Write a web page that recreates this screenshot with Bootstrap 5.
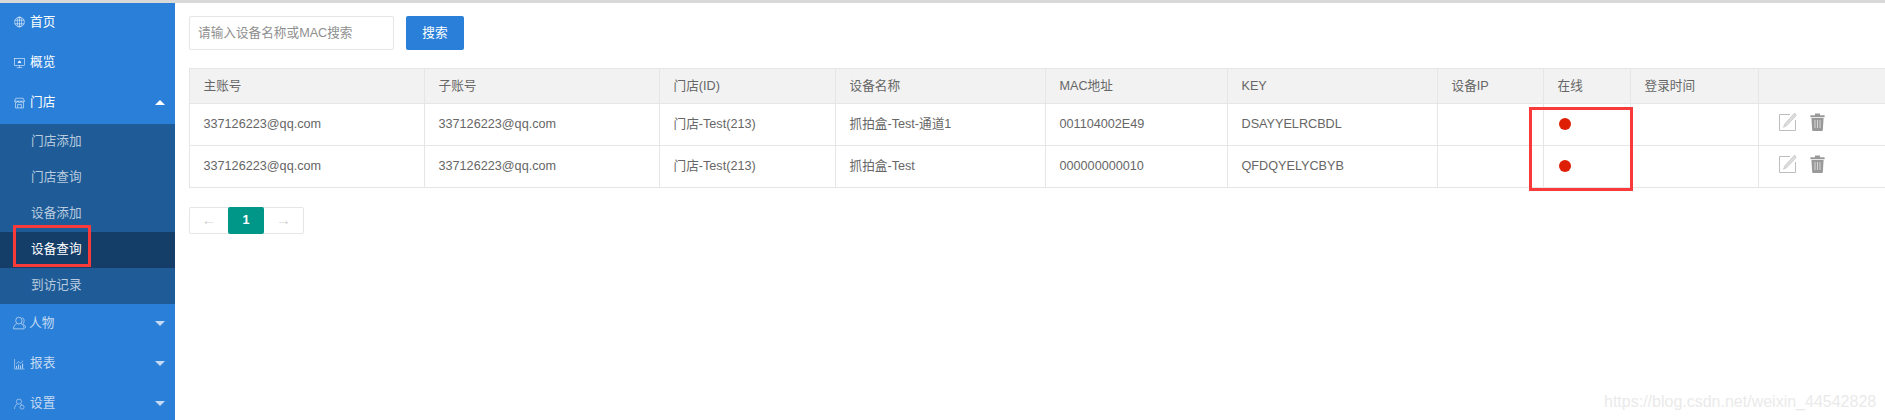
<!DOCTYPE html>
<html lang="zh-CN">
<head>
<meta charset="UTF-8">
<meta name="viewport" content="width=device-width, initial-scale=1.0">
<title>设备查询</title>
<link href="https://cdn.jsdelivr.net/npm/bootstrap@5.3.0/dist/css/bootstrap.min.css" rel="stylesheet">
<style>
    html, body { height: 100%; overflow: hidden; }
    body {
        font-family: "Liberation Sans", "Noto Sans CJK SC", sans-serif;
        font-size: 12.65px;
        color: #666;
        background: #fff;
        border-top: 3px solid #d9d9d9;
        position: relative;
    }
    .side-bar { width: 175px; height: 417px; background: #2a80d9; flex-shrink: 0; overflow: hidden; }
    .side-item { height: 40.35px; padding: 0 0 2px 14px; color: #fff; }
    .side-item.dim { color: #c5daf3; }
    .side-item svg { width: 11px; height: 12px; margin-right: 5px; flex-shrink: 0; }
    .side-item svg.wide-icon { width: 13px; height: 14px; margin: 0 3px 0 -1px; }
    .side-item .side-label { font-size: 12.65px; }
    .caret-up, .caret-down { width: 0; height: 0; margin-left: auto; margin-right: 10px; border-left: 5.5px solid transparent; border-right: 5.5px solid transparent; }
    .caret-up { border-bottom: 5px solid #fff; }
    .caret-down { border-top: 5px solid #c5daf3; }
    .sub-menu { background: #1e5b97; }
    .sub-item { height: 36px; line-height: 35px; padding-left: 31px; color: #b9cbdf; }
    .sub-item.on { background: #143d68; color: #fff; }
    .main-area { flex: 1; min-width: 0; padding: 13px 0 0 14px; }
    .search-input { width: 205px; height: 34px; border: 1px solid #e6e6e6; border-radius: 2px; padding: 0 8px; font-size: 12.65px; color: #666; }
    .search-input::placeholder { color: #8f8f8f; opacity: 1; }
    .search-btn { width: 58px; height: 34px; margin-left: 12px; padding: 0; background: #2a80d9; border: 0; border-radius: 2px; color: #fff; font-size: 12.65px; }
    .dev-tbl { table-layout: fixed; width: 1696px; margin: 18px 0 0; border-collapse: collapse; color: #666; font-size: 12.65px; }
    .dev-tbl th, .dev-tbl td { border: 1px solid #e6e6e6; padding: 0 0 0 13.5px; font-weight: 400; color: #666; vertical-align: middle; }
    .dev-tbl th { height: 35px; background: #f2f2f2; }
    .dev-tbl td { height: 42px; }
    .dev-tbl tr > :last-child { border-right: 0; }
    .w-a { width: 235px; }
    .w-c { width: 176px; }
    .w-d { width: 210px; }
    .w-e { width: 182px; }
    .w-f { width: 210px; }
    .w-g { width: 106px; }
    .w-h { width: 87px; }
    .w-i { width: 128px; }
    .red-dot { display: block; width: 12px; height: 12px; border-radius: 50%; background: #de1f06; margin: -2px 0 0 1px; }
    .act-row { padding-left: 6px; padding-bottom: 6px; gap: 13px; }
    .act-row svg { display: block; }
    .pager { margin: 19px 0 0; height: 27px; width: 115px; border: 1px solid #e6e6e6; border-radius: 2px; }
    .pager-cell { flex: 0 0 38px; display: flex; align-items: center; justify-content: center; color: #d2d2d2; font-size: 15px; }
    .pager-cell.on { flex: 0 0 36px; height: 27px; margin-top: -1px; margin-bottom: -1px; background: #009688; color: #fff; font-weight: 700; font-size: 12.65px; border-radius: 2px; }
    .pager-cell:last-child { flex: 1; }
    .mark-box { position: absolute; border: 3px solid #f93a3a; pointer-events: none; }
    .mark-side { left: 13px; top: 222px; width: 78px; height: 42px; }
    .mark-col { left: 1529px; top: 104px; width: 104px; height: 84px; }
    .water-mark { position: absolute; left: 1604px; top: 389px; font-size: 16px; line-height: 20px; color: #eaeaea; white-space: nowrap; }
</style>
</head>
<body>

<div class="d-flex">
    <!-- left menu -->
    <div class="side-bar">
        <div class="side-item d-flex align-items-center">
            <svg viewBox="0 0 12 12" fill="none" stroke="currentColor" stroke-width=".6"><circle cx="6" cy="6" r="5.3"/><ellipse cx="6" cy="6" rx="2.4" ry="5.3"/><path d="M.8 4h10.4M.8 8h10.4M6 .7v10.6"/></svg>
            <span class="side-label">首页</span>
        </div>
        <div class="side-item d-flex align-items-center">
            <svg viewBox="0 0 12 12" fill="none" stroke="currentColor" stroke-width=".6"><rect x=".5" y="1" width="11" height="7.6"/><path d="M3 11h6M6 8.6V11"/><path d="M4.4 5l1.6-1.2L7.6 5v.6H4.4z" fill="currentColor"/></svg>
            <span class="side-label">概览</span>
        </div>
        <div class="side-item d-flex align-items-center">
            <svg viewBox="0 0 12 12" fill="none" stroke="currentColor" stroke-width=".6"><path d="M2 .8h8l1.4 3.2H.6zM.8 4c0 2 3.4 2 3.4 0 0 2 3.6 2 3.6 0 0 2 3.4 2 3.4 0"/><path d="M1.6 5.6v5.8h8.8V5.6M4 11.4V7.6h4v3.8"/></svg>
            <span class="side-label">门店</span>
            <span class="caret-up"></span>
        </div>
        <div class="sub-menu">
            <div class="sub-item">门店添加</div>
            <div class="sub-item">门店查询</div>
            <div class="sub-item">设备添加</div>
            <div class="sub-item on">设备查询</div>
            <div class="sub-item">到访记录</div>
        </div>
        <div class="side-item dim d-flex align-items-center">
            <svg class="wide-icon" viewBox="0 0 12 12" fill="none" stroke="currentColor" stroke-width=".7"><ellipse cx="5.4" cy="3.8" rx="2.9" ry="3.2"/><path d="M3.4 6.6C1.6 7.4.5 9 .5 11.4h9.8c0-2.4-1-4-2.9-4.8"/><path d="M8.6 1c2 1 2.2 4.4.4 5.6 1.4.8 2.4 2 2.6 3.8"/></svg>
            <span class="side-label">人物</span>
            <span class="caret-down"></span>
        </div>
        <div class="side-item dim d-flex align-items-center">
            <svg viewBox="0 0 12 12" fill="none" stroke="currentColor" stroke-width=".7"><path d="M.6.6v10.8h10.8"/><path d="M2.8 11V8M5 11V6.4M7.2 11V7.6M9.4 11V5.4" stroke-width="1"/><path d="M2.4 5.6L5 3.6l2.2 1.4L10 2.4"/></svg>
            <span class="side-label">报表</span>
            <span class="caret-down"></span>
        </div>
        <div class="side-item dim d-flex align-items-center">
            <svg viewBox="0 0 12 12" fill="none" stroke="currentColor" stroke-width=".7"><circle cx="5.4" cy="3.4" r="2.8"/><path d="M3.4 6C1.6 7 .7 9 .6 11.4M7.4 6c.6.4 1 .8 1.4 1.3"/><circle cx="8.8" cy="9.4" r="2.2"/></svg>
            <span class="side-label">设置</span>
            <span class="caret-down"></span>
        </div>
    </div>

    <div class="main-area">
        <form class="d-flex">
            <input class="search-input" type="text" placeholder="请输入设备名称或MAC搜索">
            <button class="search-btn" type="button">搜索</button>
        </form>

        <table class="dev-tbl">
            <colgroup>
                <col class="w-a"><col class="w-a"><col class="w-c"><col class="w-d"><col class="w-e"><col class="w-f"><col class="w-g"><col class="w-h"><col class="w-i"><col>
            </colgroup>
            <thead>
                <tr><th>主账号</th><th>子账号</th><th>门店(ID)</th><th>设备名称</th><th>MAC地址</th><th>KEY</th><th>设备IP</th><th>在线</th><th>登录时间</th><th></th></tr>
            </thead>
            <tbody>
                <tr>
                    <td>337126223@qq.com</td><td>337126223@qq.com</td><td>门店-Test(213)</td><td>抓拍盒-Test-通道1</td><td>001104002E49</td><td>DSAYYELRCBDL</td><td></td>
                    <td><span class="red-dot"></span></td><td></td>
                    <td>
                        <div class="d-flex act-row">
                            <svg width="18" height="18" viewBox="0 0 18 18" fill="none"><path d="M11 1.5H.5v16h16V7" stroke="#bdbdbd"/><path d="M16.5.8l-1.4-.3L6 10.6 4.4 14.3l3.6-1.9 9-9.6z" fill="#dcdcdc" stroke="#bdbdbd" stroke-width=".6"/></svg>
                            <svg width="15" height="18" viewBox="0 0 15 18"><path d="M5 2.2V.6h5v1.6h4.6v2H.4v-2z" fill="#999"/><path d="M1.4 5h12.2l-.8 12.2c0 .4-.4.8-.8.8H3c-.4 0-.8-.4-.8-.8z" fill="#999"/><path d="M5 7v8M7.5 7v8M10 7v8" stroke="#ddd" stroke-width=".9"/></svg>
                        </div>
                    </td>
                </tr>
                <tr>
                    <td>337126223@qq.com</td><td>337126223@qq.com</td><td>门店-Test(213)</td><td>抓拍盒-Test</td><td>000000000010</td><td>QFDQYELYCBYB</td><td></td>
                    <td><span class="red-dot"></span></td><td></td>
                    <td>
                        <div class="d-flex act-row">
                            <svg width="18" height="18" viewBox="0 0 18 18" fill="none"><path d="M11 1.5H.5v16h16V7" stroke="#bdbdbd"/><path d="M16.5.8l-1.4-.3L6 10.6 4.4 14.3l3.6-1.9 9-9.6z" fill="#dcdcdc" stroke="#bdbdbd" stroke-width=".6"/></svg>
                            <svg width="15" height="18" viewBox="0 0 15 18"><path d="M5 2.2V.6h5v1.6h4.6v2H.4v-2z" fill="#999"/><path d="M1.4 5h12.2l-.8 12.2c0 .4-.4.8-.8.8H3c-.4 0-.8-.4-.8-.8z" fill="#999"/><path d="M5 7v8M7.5 7v8M10 7v8" stroke="#ddd" stroke-width=".9"/></svg>
                        </div>
                    </td>
                </tr>
            </tbody>
        </table>

        <div class="pager d-flex align-items-center">
            <span class="pager-cell">←</span>
            <span class="pager-cell on">1</span>
            <span class="pager-cell">→</span>
        </div>
    </div>
</div>

<!-- annotations drawn over the page -->
<div class="mark-box mark-side"></div>
<div class="mark-box mark-col"></div>
<div class="water-mark">https://blog.csdn.net/weixin_44542828</div>

<script src="https://cdn.jsdelivr.net/npm/bootstrap@5.3.0/dist/js/bootstrap.bundle.min.js"></script>
</body>
</html>
